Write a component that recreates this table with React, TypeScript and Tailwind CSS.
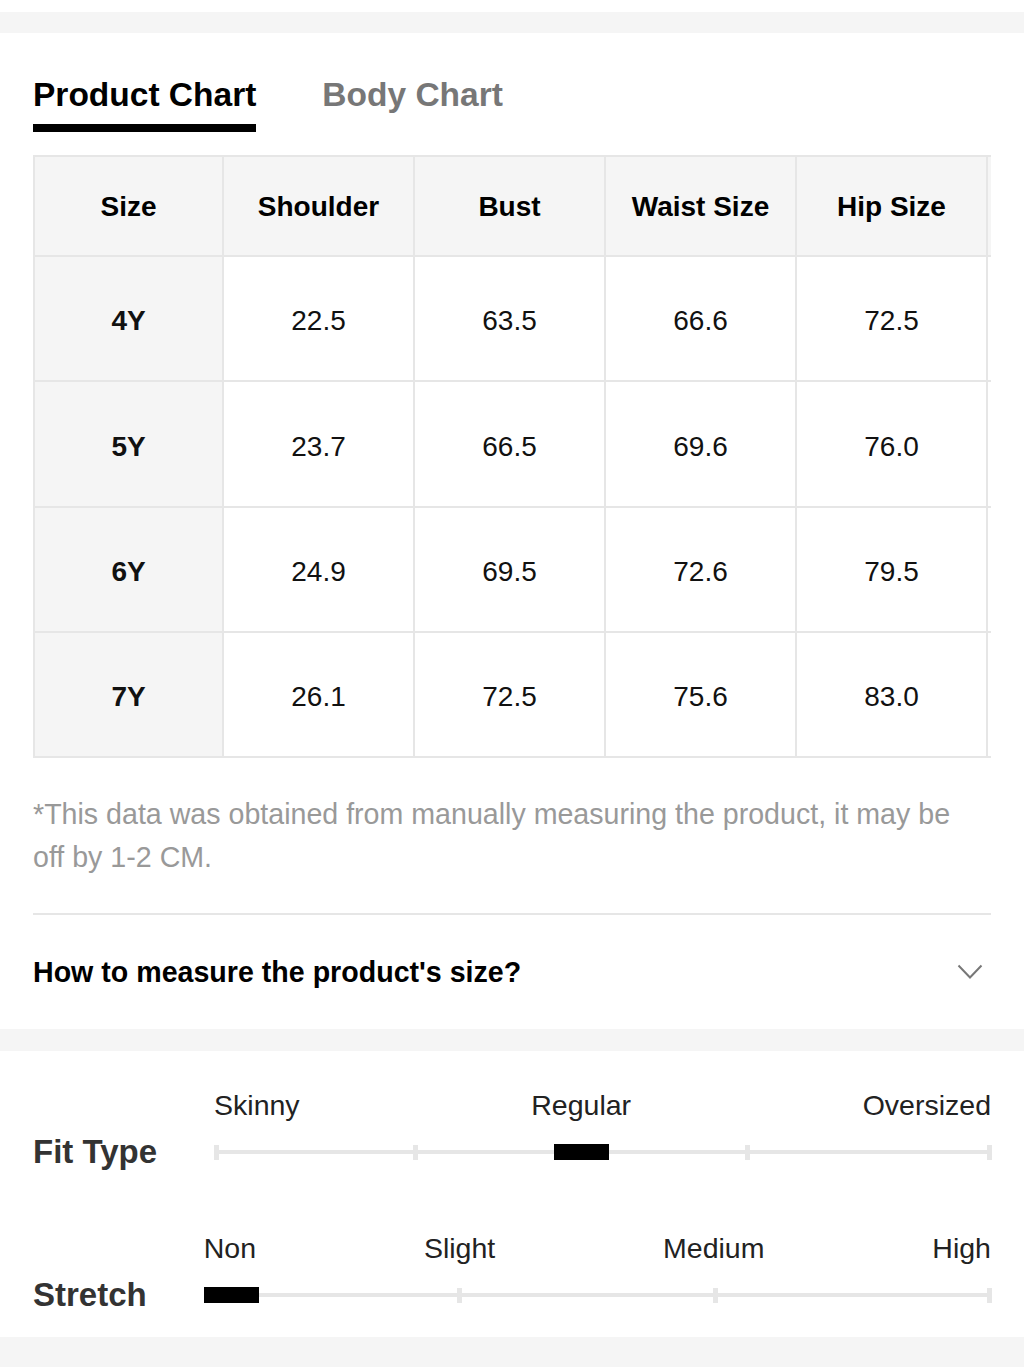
import React from "react";

const headers = ["Size", "Shoulder", "Bust", "Waist Size", "Hip Size", ""];
const rows = [
  ["4Y", "22.5", "63.5", "66.6", "72.5", ""],
  ["5Y", "23.7", "66.5", "69.6", "76.0", ""],
  ["6Y", "24.9", "69.5", "72.6", "79.5", ""],
  ["7Y", "26.1", "72.5", "75.6", "83.0", ""],
];

function Slider({
  labels,
  ticks,
  thumb,
}: {
  labels: string[];
  ticks: number[];
  thumb: number;
}) {
  return (
    <div className="flex-1 flex flex-col">
      <div className="flex justify-between text-[28.5px] leading-[28px] text-[#222] mb-[25px]">
        {labels.map((l) => (
          <span key={l}>{l}</span>
        ))}
      </div>
      <div className="relative h-[16px] flex items-center">
        <div className="h-[4px] w-full bg-[#e6e6e6]" />
        {ticks.map((t) => (
          <div
            key={t}
            className="absolute top-[0.5px] h-[15px] w-[5px] bg-[#e6e6e6]"
            style={{ left: t }}
          />
        ))}
        <div
          className="absolute top-0 h-[16px] w-[55px] bg-black"
          style={{ left: thumb }}
        />
      </div>
    </div>
  );
}

export default function App() {
  return (
    <div className="bg-white font-['Liberation_Sans',Arial,sans-serif] text-black">
      <div className="h-[12px] bg-white" />
      <div className="h-[21px] bg-[#f5f5f5]" />

      <section className="px-[33px] pt-[42px] pb-[37px]">
        <div className="flex gap-[66px] items-start">
          <div className="flex flex-col">
            <span className="text-[33.5px] leading-[40px] font-bold text-black">Product Chart</span>
            <div className="mt-[9px] h-[8px] bg-black" />
          </div>
          <span className="text-[33.5px] leading-[40px] font-bold text-[#777]">Body Chart</span>
        </div>

        <div className="mt-[23px] w-[958px] overflow-hidden">
          <div className="w-max border-l-2 border-t-2 border-[#e6e6e6]">
            <div className="flex">
              {headers.map((h, i) => (
                <div
                  key={i}
                  className={`${i === 0 ? "w-[189px]" : "w-[191px]"} h-[100px] pt-[1px] shrink-0 flex items-center justify-center bg-[#f5f5f5] border-r-2 border-b-2 border-[#e6e6e6] text-[28px] font-bold`}
                >
                  {h}
                </div>
              ))}
            </div>
            {rows.map((r, ri) => (
              <div key={r[0]} className="flex">
                {r.map((c, i) => (
                  <div
                    key={i}
                    className={`${i === 0 ? "w-[189px] bg-[#f5f5f5] font-bold" : "w-[191px] bg-white"} ${ri === 1 ? "h-[126px]" : "h-[125px]"} pt-[5px] shrink-0 flex items-center justify-center border-r-2 border-b-2 border-[#e6e6e6] text-[28px] text-[#111]`}
                  >
                    {c}
                  </div>
                ))}
              </div>
            ))}
          </div>
        </div>

        <p className="mt-[35px] w-[940px] text-[28.6px] leading-[43px] text-[#999]">
          *This data was obtained from manually measuring the product, it may be off by 1-2 CM.
        </p>

        <div className="mt-[34px] h-[2px] bg-[#e6e6e6]" />

        <div className="pt-[37px] flex items-center justify-between">
          <span className="text-[28.6px] leading-[40px] font-bold text-black">
            How to measure the product's size?
          </span>
          <svg width="26" height="16" viewBox="0 0 26 16" className="mr-[8px]" fill="none">
            <polyline points="1.5,1.5 13,13.5 24.5,1.5" stroke="#777" strokeWidth="2" />
          </svg>
        </div>
      </section>

      <div className="h-[22px] bg-[#f5f5f5]" />

      <section className="px-[33px] pt-[40px] pb-[34px]">
        <div className="flex items-end gap-[57px]">
          <span className="text-[33px] leading-[16px] font-bold text-[#333]">Fit Type</span>
          <Slider labels={["Skinny", "Regular", "Oversized"]} ticks={[0, 199, 531, 773]} thumb={340} />
        </div>
        <div className="mt-[74px] flex items-end gap-[57px]">
          <span className="text-[33px] leading-[16px] font-bold text-[#333]">Stretch</span>
          <Slider labels={["Non", "Slight", "Medium", "High"]} ticks={[253, 509, 783]} thumb={0} />
        </div>
      </section>

      <div className="h-[30px] bg-[#f5f5f5]" />
    </div>
  );
}
